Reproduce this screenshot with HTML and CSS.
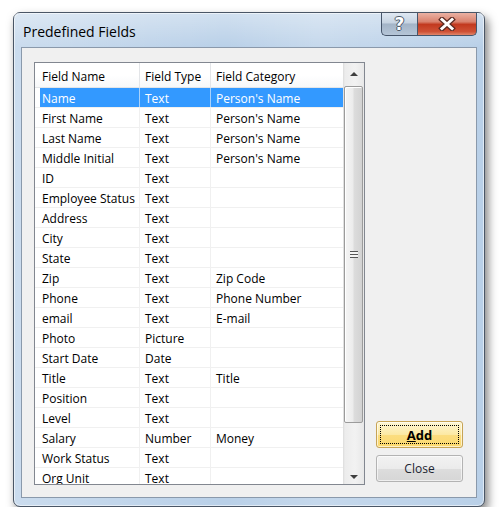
FILE: index.html
```html
<!DOCTYPE html>
<html lang="en">
<head>
  <meta charset="UTF-8" />
  <title>Predefined Fields</title>
  <link rel="stylesheet" href="styles.css">
</head>
<body>
  <div class="window">
    <div class="titlebar">
      <span class="title">Predefined Fields</span>
      <div class="caption-btns">
        <div class="cap help">?</div>
        <div class="cap close">
          <svg width="18" height="14" viewBox="0 0 18 14">
            <path d="M4 2.5 L14 11.5 M14 2.5 L4 11.5" stroke="#5a2a22" stroke-width="5.4" stroke-linecap="square" fill="none"/>
            <path d="M4 2.5 L14 11.5 M14 2.5 L4 11.5" stroke="#fff" stroke-width="3" stroke-linecap="square" fill="none"/>
          </svg>
        </div>
      </div>
    </div>

    <div class="client">
      <div class="listview">
        <div class="list-body">
          <div class="row head">
            <div class="cell">Field Name</div>
            <div class="cell">Field Type</div>
            <div class="cell">Field Category</div>
          </div>
          <div class="row sel">
            <div class="cell">Name</div>
            <div class="cell">Text</div>
            <div class="cell">Person's Name</div>
          </div>
          <div class="row">
            <div class="cell">First Name</div>
            <div class="cell">Text</div>
            <div class="cell">Person's Name</div>
          </div>
          <div class="row">
            <div class="cell">Last Name</div>
            <div class="cell">Text</div>
            <div class="cell">Person's Name</div>
          </div>
          <div class="row">
            <div class="cell">Middle Initial</div>
            <div class="cell">Text</div>
            <div class="cell">Person's Name</div>
          </div>
          <div class="row">
            <div class="cell">ID</div>
            <div class="cell">Text</div>
            <div class="cell"></div>
          </div>
          <div class="row">
            <div class="cell">Employee Status</div>
            <div class="cell">Text</div>
            <div class="cell"></div>
          </div>
          <div class="row">
            <div class="cell">Address</div>
            <div class="cell">Text</div>
            <div class="cell"></div>
          </div>
          <div class="row">
            <div class="cell">City</div>
            <div class="cell">Text</div>
            <div class="cell"></div>
          </div>
          <div class="row">
            <div class="cell">State</div>
            <div class="cell">Text</div>
            <div class="cell"></div>
          </div>
          <div class="row">
            <div class="cell">Zip</div>
            <div class="cell">Text</div>
            <div class="cell">Zip Code</div>
          </div>
          <div class="row">
            <div class="cell">Phone</div>
            <div class="cell">Text</div>
            <div class="cell">Phone Number</div>
          </div>
          <div class="row">
            <div class="cell">email</div>
            <div class="cell">Text</div>
            <div class="cell">E-mail</div>
          </div>
          <div class="row">
            <div class="cell">Photo</div>
            <div class="cell">Picture</div>
            <div class="cell"></div>
          </div>
          <div class="row">
            <div class="cell">Start Date</div>
            <div class="cell">Date</div>
            <div class="cell"></div>
          </div>
          <div class="row">
            <div class="cell">Title</div>
            <div class="cell">Text</div>
            <div class="cell">Title</div>
          </div>
          <div class="row">
            <div class="cell">Position</div>
            <div class="cell">Text</div>
            <div class="cell"></div>
          </div>
          <div class="row">
            <div class="cell">Level</div>
            <div class="cell">Text</div>
            <div class="cell"></div>
          </div>
          <div class="row">
            <div class="cell">Salary</div>
            <div class="cell">Number</div>
            <div class="cell">Money</div>
          </div>
          <div class="row">
            <div class="cell">Work Status</div>
            <div class="cell">Text</div>
            <div class="cell"></div>
          </div>
          <div class="row">
            <div class="cell">Org Unit</div>
            <div class="cell">Text</div>
            <div class="cell"></div>
          </div>
        </div>

        <div class="vscroll">
          <div class="arrow"><span class="tri up"></span></div>
          <div class="track">
            <div class="thumb">
              <span class="grip"></span>
            </div>
          </div>
          <div class="arrow"><span class="tri down"></span></div>
        </div>
      </div>

      <div class="side">
        <button class="btn add"><span class="focus"><u>A</u>dd</span></button>
        <button class="btn">Close</button>
      </div>
    </div>
  </div>
</body>
</html>
```

FILE: styles.css
```css
body {
  margin: 0;
  padding: 12px 0 0 13px;
  background: #fff;
  font-family: 'Open Sans', 'Noto Sans', sans-serif;
  font-size: 12px;
  color: #000;
}

.window {
  width: 472px;
  height: 495px;
  box-sizing: border-box;
  border: 1px solid #4a5666;
  border-radius: 7px;
  background: linear-gradient(to right, rgba(255,255,255,0.25), rgba(255,255,255,0) 45%, rgba(255,255,255,0.18) 65%, rgba(255,255,255,0)), #b9d0e8;
  box-shadow: inset 0 0 0 1px rgba(255,255,255,0.55), 3px 5px 10px rgba(0,0,0,0.5);
  padding: 0 7px 8px 7px;
}

.titlebar {
  height: 34px;
  display: flex;
  justify-content: space-between;
  align-items: flex-start;
  background: linear-gradient(to bottom, rgba(255,255,255,0.35), rgba(255,255,255,0));
  margin: 0 -7px;
  padding: 0 7px;
}

.title {
  font-size: 14px;
  line-height: 18px;
  margin: 10px 0 0 2px;
  color: #000;
}

.caption-btns {
  display: flex;
  height: 23px;
}

.cap {
  box-sizing: border-box;
  height: 23px;
  border: 1px solid #46556a;
  border-top: none;
  display: flex;
  align-items: center;
  justify-content: center;
}

.help {
  width: 36px;
  border-radius: 0 0 0 5px;
  border-right: none;
  background: linear-gradient(to bottom, #dfe8f2, #c6d3e1 45%, #a3b4c7 50%, #b5c5d7);
  color: #fff;
  font-family: 'DejaVu Sans', sans-serif;
  font-weight: bold;
  font-size: 17px;
  text-shadow: 1px 0 0 #4b5868, -1px 0 0 #4b5868, 0 1px 0 #4b5868, 0 -1px 0 #4b5868;
}

.close {
  width: 60px;
  border-radius: 0 0 5px 0;
  background: linear-gradient(to bottom, #eab1a3, #d9826e 40%, #c2391f 52%, #cf5236 85%, #e0866b);
}

.client {
  width: 456px;
  height: 451px;
  box-sizing: border-box;
  border: 1px solid #8a99ab;
  background: #f0f0f0;
  padding: 14px 12px 0 12px;
  display: flex;
}

.listview {
  width: 331px;
  height: 423px;
  box-sizing: border-box;
  border: 1px solid #828790;
  background: #fff;
  display: flex;
  overflow: hidden;
}

.list-body {
  width: 308px;
  overflow: hidden;
}

.row {
  display: grid;
  grid-template-columns: 105px 71px 132px;
  height: 20px;
  box-sizing: border-box;
  border-bottom: 1px solid #f0f0f0;
}

.cell {
  box-sizing: border-box;
  border-right: 1px solid #f0f0f0;
  line-height: 21px;
  white-space: nowrap;
  overflow: hidden;
}

.cell:nth-child(1) { padding-left: 7px; }
.cell:nth-child(2) { padding-left: 5px; }
.cell:nth-child(3) { padding-left: 5px; border-right: none; }

.head {
  height: 25px;
  background: linear-gradient(to bottom, #fff, #fff 50%, #f7f8f9);
  border-bottom: 1px solid #e3e5e8;
}

.head .cell {
  line-height: 27px;
  border-right-color: #e3e5e8;
}

.sel .cell {
  background: #3399ff;
  color: #fff;
  border-right-color: #a9d2fb;
}

.sel .cell:first-child {
  background: linear-gradient(to right, #fff 5px, #3399ff 5px);
}

.vscroll {
  width: 21px;
  display: flex;
  flex-direction: column;
  background: linear-gradient(to right, #dcdcdc, #ececec 2px, #f2f2f2 12px, #e8e8e8);
}

.arrow {
  height: 20px;
  display: flex;
  align-items: center;
  justify-content: center;
}

.tri {
  width: 0;
  height: 0;
  border-left: 4px solid transparent;
  border-right: 4px solid transparent;
}

.tri.up {
  border-bottom: 4px solid #3f3f3f;
  margin-top: 1px;
}

.tri.down {
  border-top: 4px solid #3f3f3f;
  margin-top: 6px;
}

.track {
  flex: 1;
  padding: 3px 1px 0 1px;
}

.thumb {
  height: 337px;
  box-sizing: border-box;
  border: 1px solid #9b9b9b;
  border-radius: 2px;
  background: linear-gradient(to right, #f5f5f5, #ececec 45%, #dcdcdc 55%, #d2d2d2);
  box-shadow: inset 1px 1px 0 #fff;
  display: flex;
  align-items: center;
  justify-content: center;
}

.grip {
  width: 8px;
  height: 7px;
  background: repeating-linear-gradient(to bottom, #555 0, #555 1px, #f4f4f4 1px, #f4f4f4 3px);
}

.side {
  margin-left: 11px;
  height: 423px;
  display: flex;
  flex-direction: column;
  justify-content: flex-end;
  gap: 7px;
  padding-bottom: 3px;
  box-sizing: border-box;
}

.btn {
  width: 87px;
  height: 27px;
  box-sizing: border-box;
  border: 1px solid #b3b3b3;
  border-radius: 3px;
  background: linear-gradient(to bottom, #f2f2f2, #ebebeb 50%, #dddddd 51%, #d6d6d6);
  font-family: 'Open Sans', 'Noto Sans', sans-serif;
  font-size: 12px;
  color: #1b2431;
  padding: 0;
  box-shadow: inset 0 0 0 1px rgba(255,255,255,0.6);
}

.btn.add {
  border-color: #c7a455;
  background: linear-gradient(to bottom, #fef7d4, #fce9a4 50%, #fbdd80 51%, #fcd96e);
  font-weight: bold;
  color: #000;
  padding: 3px;
}

.btn.add .focus {
  display: flex;
  align-items: center;
  justify-content: center;
  height: 100%;
  border: 1px dotted #000;
  box-sizing: border-box;
  font-size: 13px;
}
```
